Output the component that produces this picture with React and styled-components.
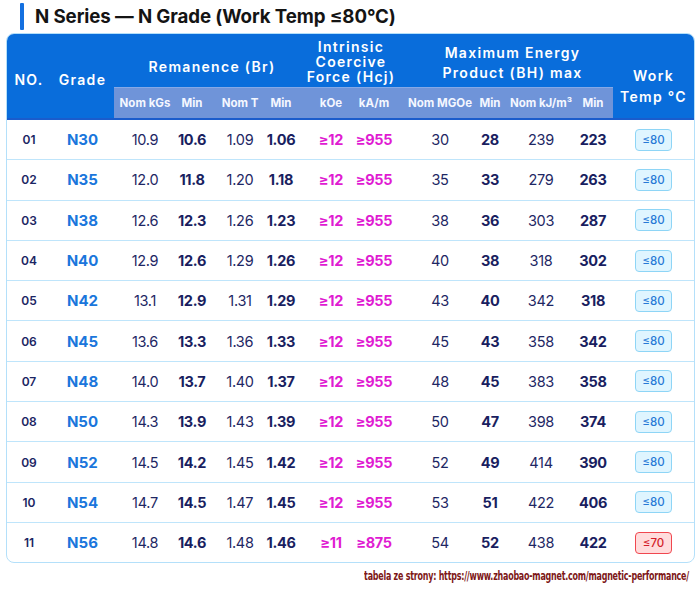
import React from 'react';
import styled, { createGlobalStyle } from 'styled-components';

const GlobalStyle = createGlobalStyle`
  html, body {
    margin: 0;
    padding: 0;
    background: #ffffff;
  }
  body {
    font-family: Inter, "Noto Sans", "DejaVu Sans", sans-serif;
    color: #1d2566;
  }
`;

// 16 tracks: data columns plus a few narrow spacer tracks between groups
const TRACKS = '44px 63px 62px 32px 64px 18px 10px 62px 24px 16px 76px 24px 78px 26px 7px 81px';

const Page = styled.div`
  width: 700px;
  height: 590px;
  padding: 3px 5px 0 6px;
  box-sizing: border-box;
`;

const TitleBar = styled.div`
  display: flex;
  align-items: center;
  gap: 11px;
  height: 27px;
  padding-left: 14px;
  margin-bottom: 3px;
`;

const Accent = styled.span`
  width: 4px;
  height: 27px;
  background: #1470e0;
  border-radius: 1px;
`;

const Title = styled.h1`
  margin: 0;
  font-size: 18.7px;
  font-weight: 700;
  color: #141414;
  letter-spacing: -0.1px;
`;

const Table = styled.div`
  width: 689px;
  border: 1px solid #b4e0fa;
  border-radius: 8px;
  overflow: hidden;
  box-sizing: border-box;
`;

const Head = styled.div`
  display: grid;
  grid-template-columns: ${TRACKS};
  grid-template-rows: 53px 31px;
  background: #096ddb;
  border-bottom: 2px solid #1a5ccc;
  color: #ffffff;
`;

const HeadCell = styled.div`
  grid-column: ${(p) => p.$col};
  grid-row: ${(p) => p.$row};
  display: flex;
  align-items: center;
  justify-content: center;
  text-align: center;
  font-size: 14px;
  font-weight: 600;
  letter-spacing: 1.3px;
  line-height: ${(p) => p.$lh || 14}px;
  white-space: nowrap;
  padding-top: ${(p) => p.$top || 0}px;
  padding-left: ${(p) => p.$left || 0}px;
`;

const Band = styled.div`
  grid-column: 3 / 16;
  grid-row: 2;
  background: #6f94d9;
  border-top: 1px solid #86a9e6;
`;

const SubCell = styled.div`
  grid-column: ${(p) => p.$col};
  grid-row: 2;
  display: flex;
  align-items: center;
  justify-content: center;
  font-size: 11.5px;
  font-weight: 700;
  white-space: nowrap;
  color: #f4f7ff;
`;

const Row = styled.div`
  display: grid;
  grid-template-columns: ${TRACKS};
  height: 39.3px;
  border-top: ${(p) => (p.$first ? 'none' : '1px solid #bfe5fb')};
`;

const Cell = styled.div`
  grid-column: ${(p) => p.$col};
  display: flex;
  align-items: center;
  justify-content: center;
  white-space: nowrap;
`;

const No = styled(Cell)`
  font-size: 12px;
  font-weight: 600;
  color: #1b2563;
`;

const Grade = styled(Cell)`
  font-size: 15px;
  font-weight: 700;
  color: #1a76dc;
`;

const Value = styled(Cell)`
  font-size: 14.5px;
  font-weight: ${(p) => (p.$bold ? 700 : 400)};
  color: ${(p) => (p.$bold ? '#191e60' : '#1e2764')};
  letter-spacing: -0.3px;
`;

const Pink = styled(Cell)`
  font-size: 14.5px;
  font-weight: 700;
  color: #e01bd2;
  letter-spacing: -0.3px;
`;

const Badge = styled.span`
  display: inline-flex;
  align-items: center;
  justify-content: center;
  width: 37px;
  height: 22px;
  box-sizing: border-box;
  border-radius: 4px;
  font-size: 11.5px;
  font-weight: 500;
  border: 1px solid ${(p) => (p.$hot ? '#f0474f' : '#8ed5f6')};
  background: ${(p) => (p.$hot ? '#ffdcdc' : '#dff5ff')};
  color: ${(p) => (p.$hot ? '#d41d2a' : '#2779d6')};
`;

const SourceLine = styled.div`
  display: flex;
  justify-content: flex-end;
  margin-top: 6px;
  padding-right: 6px;
`;

const Source = styled.span`
  display: inline-block;
  font-family: "DejaVu Sans Condensed", "DejaVu Sans", sans-serif;
  font-size: 11.5px;
  font-weight: 700;
  color: #7d1717;
  letter-spacing: -0.3px;
  transform: scaleX(0.77);
  transform-origin: right center;
  white-space: nowrap;
`;

const rows = [
  ['01', 'N30', '10.9', '10.6', '1.09', '1.06', '≥12', '≥955', '30', '28', '239', '223', '≤80'],
  ['02', 'N35', '12.0', '11.8', '1.20', '1.18', '≥12', '≥955', '35', '33', '279', '263', '≤80'],
  ['03', 'N38', '12.6', '12.3', '1.26', '1.23', '≥12', '≥955', '38', '36', '303', '287', '≤80'],
  ['04', 'N40', '12.9', '12.6', '1.29', '1.26', '≥12', '≥955', '40', '38', '318', '302', '≤80'],
  ['05', 'N42', '13.1', '12.9', '1.31', '1.29', '≥12', '≥955', '43', '40', '342', '318', '≤80'],
  ['06', 'N45', '13.6', '13.3', '1.36', '1.33', '≥12', '≥955', '45', '43', '358', '342', '≤80'],
  ['07', 'N48', '14.0', '13.7', '1.40', '1.37', '≥12', '≥955', '48', '45', '383', '358', '≤80'],
  ['08', 'N50', '14.3', '13.9', '1.43', '1.39', '≥12', '≥955', '50', '47', '398', '374', '≤80'],
  ['09', 'N52', '14.5', '14.2', '1.45', '1.42', '≥12', '≥955', '52', '49', '414', '390', '≤80'],
  ['10', 'N54', '14.7', '14.5', '1.47', '1.45', '≥12', '≥955', '53', '51', '422', '406', '≤80'],
  ['11', 'N56', '14.8', '14.6', '1.48', '1.46', '≥11', '≥875', '54', '52', '438', '422', '≤70'],
];

const subHeads = [
  ['Nom kGs', 3], ['Min', 4], ['Nom T', 5], ['Min', 6],
  ['kOe', 8], ['kA/m', 9],
  ['Nom MGOe', 11], ['Min', 12], ['Nom kJ/m³', 13], ['Min', 14],
];

const App = () => (
  <Page>
    <GlobalStyle />
    <TitleBar>
      <Accent />
      <Title>N Series — N Grade (Work Temp ≤80°C)</Title>
    </TitleBar>
    <Table>
      <Head>
        <HeadCell $col="1" $row="1 / 3" $top={8}>NO.</HeadCell>
        <HeadCell $col="2" $row="1 / 3" $top={8}>Grade</HeadCell>
        <HeadCell $col="3 / 8" $row="1" $top={12} $left={10}>Remanence (Br)</HeadCell>
        <HeadCell $col="8 / 11" $row="1" $top={1} $lh={15}>
          Intrinsic<br />Coercive<br />Force (Hcj)
        </HeadCell>
        <HeadCell $col="11 / 16" $row="1" $top={4} $left={10} $lh={20}>
          Maximum Energy<br />Product (BH) max
        </HeadCell>
        <HeadCell $col="16" $row="1 / 3" $top={20} $lh={21}>
          Work<br />Temp °C
        </HeadCell>
        <Band />
        {subHeads.map(([label, col], i) => (
          <SubCell key={i} $col={col}>{label}</SubCell>
        ))}
      </Head>
      {rows.map((r, i) => (
        <Row key={r[0]} $first={i === 0}>
          <No $col={1}>{r[0]}</No>
          <Grade $col={2}>{r[1]}</Grade>
          <Value $col={3}>{r[2]}</Value>
          <Value $col={4} $bold>{r[3]}</Value>
          <Value $col={5}>{r[4]}</Value>
          <Value $col={6} $bold>{r[5]}</Value>
          <Pink $col={8}>{r[6]}</Pink>
          <Pink $col={9}>{r[7]}</Pink>
          <Value $col={11}>{r[8]}</Value>
          <Value $col={12} $bold>{r[9]}</Value>
          <Value $col={13}>{r[10]}</Value>
          <Value $col={14} $bold>{r[11]}</Value>
          <Cell $col={16}>
            <Badge $hot={r[12] === '≤70'}>{r[12]}</Badge>
          </Cell>
        </Row>
      ))}
    </Table>
    <SourceLine>
      <Source>tabela ze strony: https://www.zhaobao-magnet.com/magnetic-performance/</Source>
    </SourceLine>
  </Page>
);

export default App;
